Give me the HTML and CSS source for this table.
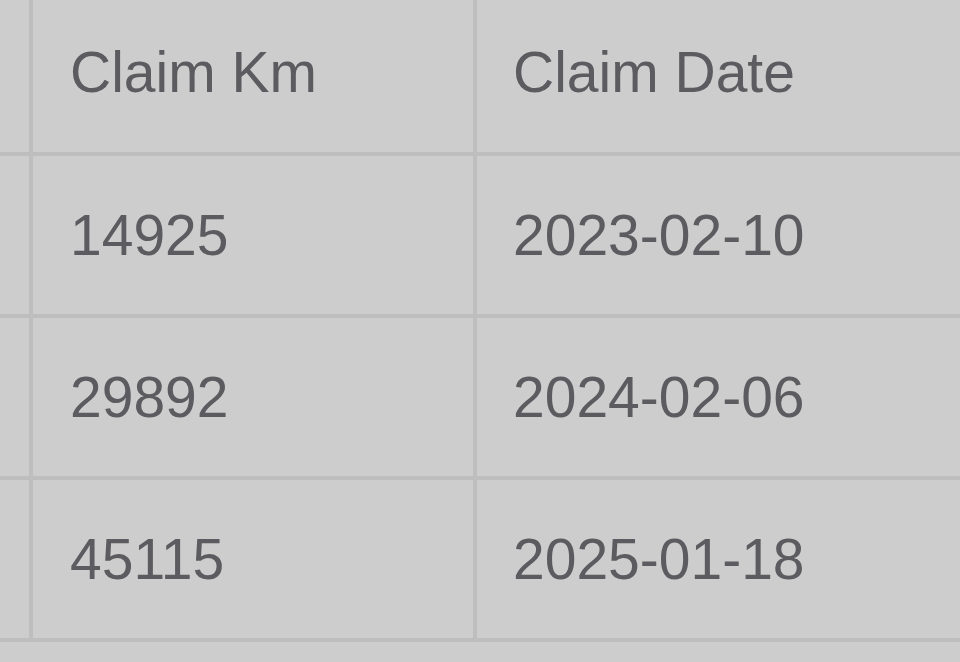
FILE: index.html
```html
<!DOCTYPE html>
<html lang="en">
<head>
<meta charset="utf-8">
<title>Claims</title>
<link rel="stylesheet" href="styles.css">
</head>
<body>
<div class="table">
  <div class="cell edge head"></div>
  <div class="cell km head"><span>Claim Km</span></div>
  <div class="cell date head"><span>Claim Date</span></div>

  <div class="cell edge"></div>
  <div class="cell km"><span>14925</span></div>
  <div class="cell date"><span>2023-02-10</span></div>

  <div class="cell edge"></div>
  <div class="cell km"><span>29892</span></div>
  <div class="cell date"><span>2024-02-06</span></div>

  <div class="cell edge"></div>
  <div class="cell km"><span>45115</span></div>
  <div class="cell date"><span>2025-01-18</span></div>
</div>
</body>
</html>
```

FILE: styles.css
```css
html, body {
  margin: 0;
  padding: 0;
  background: #cdcdcd;
  width: 960px;
  height: 662px;
  overflow: hidden;
}

.table {
  display: grid;
  grid-template-columns: 29px 444px 1fr;
  grid-auto-rows: 162px;
  grid-template-rows: 156px;
  width: 960px;
  font-family: "Liberation Sans", Arial, sans-serif;
  font-size: 57px;
  color: #5c5c60;
}

.cell {
  box-sizing: border-box;
  border-bottom: 4px solid #bebebe;
  display: flex;
  align-items: center;
  line-height: 64px;
  white-space: nowrap;
}

.km,
.date {
  border-left: 4px solid #bebebe;
}

.km {
  padding-left: 37px;
}

.date {
  padding-left: 36px;
}

.head {
  padding-bottom: 9px;
}
```
